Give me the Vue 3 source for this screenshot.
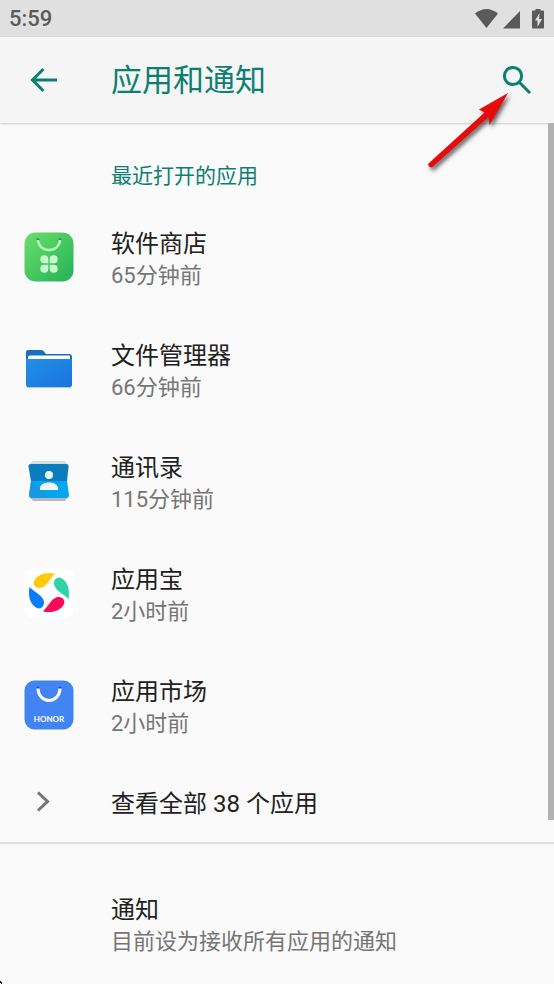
<template>
  <div class="screen">
    <div class="status-bar">
      <span class="clock">5:59</span>
      <svg class="status-icons" width="72" height="24" viewBox="0 0 72 24" aria-hidden="true">
        <path d="M2 6.500Q13.500 -2.500 25 6.500L13.500 21Z" />
        <path d="M30 21.500 47 4V21.500Z" />
        <path d="M60 3.500h2.500V2h5v1.500H70q1 0 1 1V20.500q0 1-1 1H60q-1 0-1-1V4.500q0-1 1-1Z" />
        <path class="bolt" d="M66.500 6 62 13.500h2.500V20l4.500-8h-2.800Z" />
      </svg>
    </div>

    <header class="app-bar">
      <button class="icon-button back" type="button" aria-label="返回">
        <svg width="28" height="26" viewBox="0 0 28 26">
          <path d="M27 13H3M13.500 2 2.500 13l11 11" />
        </svg>
      </button>
      <h1>应用和通知</h1>
      <button class="icon-button search" type="button" aria-label="搜索">
        <svg width="30" height="30" viewBox="0 0 30 30">
          <circle cx="11" cy="11" r="8.600" />
          <path d="M17.500 17.500 28 28" />
        </svg>
      </button>
    </header>

    <main>
      <section>
        <h2>最近打开的应用</h2>
        <a v-for="app in recentApps" :key="app.id" class="row" href="#">
          <span class="row-icon">
            <svg v-if="app.id === 'store'" width="50" height="50" viewBox="0 0 50 50">
              <defs>
                <linearGradient id="store-bg" x1="0" y1="0" x2="1" y2="1">
                  <stop offset="0" stop-color="#6bdf6b" />
                  <stop offset="1" stop-color="#23b158" />
                </linearGradient>
              </defs>
              <rect x=".5" y=".5" width="49" height="49" rx="11" fill="url(#store-bg)" />
              <g fill="#249c48">
                <circle cx="14" cy="7.500" r="1.500" />
                <circle cx="36" cy="7.500" r="1.500" />
              </g>
              <path d="M14 8a11 10 0 0 0 22 0" fill="none" stroke="#b9f7b9" stroke-width="2.400" />
              <g fill="#c8f9cd">
                <path d="M24.300 31.300h-4a4 4 0 1 1 4-4Z" />
                <path d="M25.700 31.300v-4a4 4 0 1 1 4 4Z" />
                <path d="M24.300 32.700v4a4 4 0 1 1-4-4Z" />
                <path d="M25.700 32.700h4a4 4 0 1 1-4 4Z" />
              </g>
            </svg>

            <svg v-else-if="app.id === 'files'" width="50" height="50" viewBox="0 0 50 50">
              <defs>
                <linearGradient id="files-front" x1="0" y1="0" x2="1" y2="1">
                  <stop offset="0" stop-color="#2190e9" />
                  <stop offset="1" stop-color="#1b73da" />
                </linearGradient>
              </defs>
              <path d="M4 6h13q1.500 0 2.500 1l2.500 3h23q3 0 3 3v28H2V8q0-2 2-2Z" fill="#176fbd" />
              <path d="M6 11.500h39q1 0 1 1v5H4v-4q0-2 2-2Z" fill="#fff" />
              <path d="M2 15h46v26q0 2-2 2H4q-2 0-2-2Z" fill="url(#files-front)" />
              <path d="M3 43.500h44" stroke="#a9c8ea" />
            </svg>

            <svg v-else-if="app.id === 'contacts'" width="50" height="50" viewBox="0 0 50 50">
              <path d="M9 5h32l3 4H5Z" fill="#d8dde0" />
              <path d="M6 41h38l-3 4H9Z" fill="#b4bbc0" />
              <path d="M7 8h35q3 0 2.500 3L43 25H7L4.500 11Q4 8 7 8Z" fill="#0b7dbf" />
              <path d="M7 25h36l2 14q0 3-3 3H8q-3 0-3-3Z" fill="#07a5ef" />
              <path d="M7 25 25 42H8q-3 0-3-3Z" fill="#149bdf" />
              <circle cx="25" cy="19" r="4" fill="#eef8fd" />
              <path d="M16 34v-1.500c0-8 18-8 18 0V34Z" fill="#eef8fd" />
            </svg>

            <svg v-else-if="app.id === 'yyb'" width="50" height="50" viewBox="0 0 50 50">
              <rect x=".5" y=".5" width="49" height="49" rx="8" fill="#fff" />
              <path d="M31 5.500C20 3.500 13 7.500 10.500 12c-3 5 2 9.500 7.500 7.500 5-2 8-9 13-14Z" fill="#ffc90a" />
              <path d="M44.500 31C46.500 20 42.500 13 38 10.500c-5-3-9.500 2-7.500 7.500 2 5 9 8 14 13Z" fill="#2fd3a5" />
              <path d="M19 43.500C30 45.500 37 41.500 39.500 37c3-5-2-9.500-7.500-7.500-5 2-8 9-13 14Z" fill="#fb0858" />
              <path d="M5.500 19C3.500 30 7.500 37 12 39.500c5 3 9.500-2 7.500-7.500C17.500 27 10.500 24 5.500 19Z" fill="#087cff" />
            </svg>

            <svg v-else width="50" height="50" viewBox="0 0 50 50">
              <rect x=".5" y=".5" width="49" height="49" rx="10" fill="#4384f4" />
              <g fill="#174eb0">
                <circle cx="14" cy="8" r="1.500" />
                <circle cx="36" cy="8" r="1.500" />
              </g>
              <path d="M14 8.500a11 12 0 0 0 22 0" fill="none" stroke="#fff" stroke-width="3" />
              <text class="logo-text" x="25" y="42" text-anchor="middle">HONOR</text>
            </svg>
          </span>
          <span class="row-text">
            <span class="title">{{ app.name }}</span>
            <span class="summary">{{ app.opened }}</span>
          </span>
        </a>

        <a class="row view-all" href="#">
          <span class="row-icon">
            <svg class="chevron" width="36" height="24" viewBox="0 0 36 24" aria-hidden="true">
              <path d="M14 2.500 23.500 11.500 14 20.500" />
            </svg>
          </span>
          <span class="row-text">
            <span class="title">查看全部 38 个应用</span>
          </span>
        </a>
      </section>

      <section class="notifications">
        <a class="row" href="#">
          <span class="row-icon"></span>
          <span class="row-text">
            <span class="title">通知</span>
            <span class="summary">目前设为接收所有应用的通知</span>
          </span>
        </a>
      </section>

      <div class="scroll-thumb"></div>
    </main>

    <svg class="pointer" width="96" height="90" viewBox="0 0 96 90" aria-hidden="true">
      <path d="M85 5 56 21.500l5.500 3L6 75a2.500 2.500 0 0 0 4 3.500L65.500 29l1 8Z" />
    </svg>
    <svg class="corner-mark" width="2" height="3" viewBox="0 0 2 3" aria-hidden="true">
      <path d="M0 0h1v1h1v2H1V2H0Z" />
    </svg>
  </div>
</template>

<script setup>
const recentApps = [
  { id: 'store', name: '软件商店', opened: '65分钟前' },
  { id: 'files', name: '文件管理器', opened: '66分钟前' },
  { id: 'contacts', name: '通讯录', opened: '115分钟前' },
  { id: 'yyb', name: '应用宝', opened: '2小时前' },
  { id: 'honor', name: '应用市场', opened: '2小时前' }
]
</script>

<style>
body {
  margin: 0;
  background: #fafafa;
}
</style>

<style scoped>
.screen {
  position: relative;
  min-height: 100vh;
  overflow: hidden;
  background: #fafafa;
  color: #212121;
  font-family: Roboto, "Noto Sans CJK SC", sans-serif;
}

.status-bar {
  display: flex;
  align-items: center;
  justify-content: space-between;
  box-sizing: border-box;
  height: 37px;
  padding: 0 9px;
  background: #e0e0e0;
  color: #5a5a5a;
}

.clock {
  font-size: 22px;
  font-weight: 500;
}

.status-icons {
  fill: #5a5a5a;
}

.status-icons .bolt {
  fill: #e0e0e0;
}

.app-bar {
  position: relative;
  display: flex;
  align-items: center;
  box-sizing: border-box;
  height: 86px;
  padding: 0 16px 0 24px;
  background: #f5f5f5;
  box-shadow: 0 1px 2px rgba(0, 0, 0, 0.2);
  color: #0b8070;
}

.icon-button {
  display: flex;
  align-items: center;
  height: 48px;
  padding: 0 6px;
  border: 0;
  background: none;
  color: inherit;
}

.icon-button svg {
  fill: none;
  stroke: currentColor;
  stroke-width: 3;
}

.back {
  width: 87px;
}

h1 {
  flex: 1;
  margin: 0;
  padding-top: 2px;
  font-size: 31px;
  font-weight: 400;
  line-height: 44px;
}

main {
  position: relative;
}

h2 {
  margin: 0;
  padding: 28px 24px 0 111px;
  color: #0b8070;
  font-size: 21px;
  font-weight: 400;
  line-height: 50px;
}

.row {
  display: flex;
  align-items: center;
  min-height: 112px;
  color: inherit;
  text-decoration: none;
}

.row-icon {
  display: flex;
  flex: none;
  box-sizing: border-box;
  width: 111px;
  padding-left: 24px;
}

.row-text {
  display: flex;
  flex-direction: column;
  padding-top: 5px;
}

.title {
  font-size: 24px;
  line-height: 31px;
}

.summary {
  color: #757575;
  font-size: 22px;
  line-height: 31px;
}

.logo-text {
  fill: #fff;
  font-family: Lato, sans-serif;
  font-size: 8px;
  font-weight: 700;
}

.view-all {
  min-height: 81px;
}

.chevron path {
  fill: none;
  stroke: #757575;
  stroke-width: 3;
}

.notifications {
  padding-top: 23px;
  border-top: 2px solid #dedede;
}

.scroll-thumb {
  position: absolute;
  top: 0;
  right: 0;
  width: 6px;
  height: 697px;
  background: #b2b2b2;
}

.pointer {
  position: absolute;
  top: 88px;
  right: 35px;
  fill: #e60c0c;
  filter: drop-shadow(2px 3px 2px rgba(0, 0, 0, 0.6));
  pointer-events: none;
}

.corner-mark {
  position: absolute;
  bottom: 0;
  left: 0;
}
</style>
